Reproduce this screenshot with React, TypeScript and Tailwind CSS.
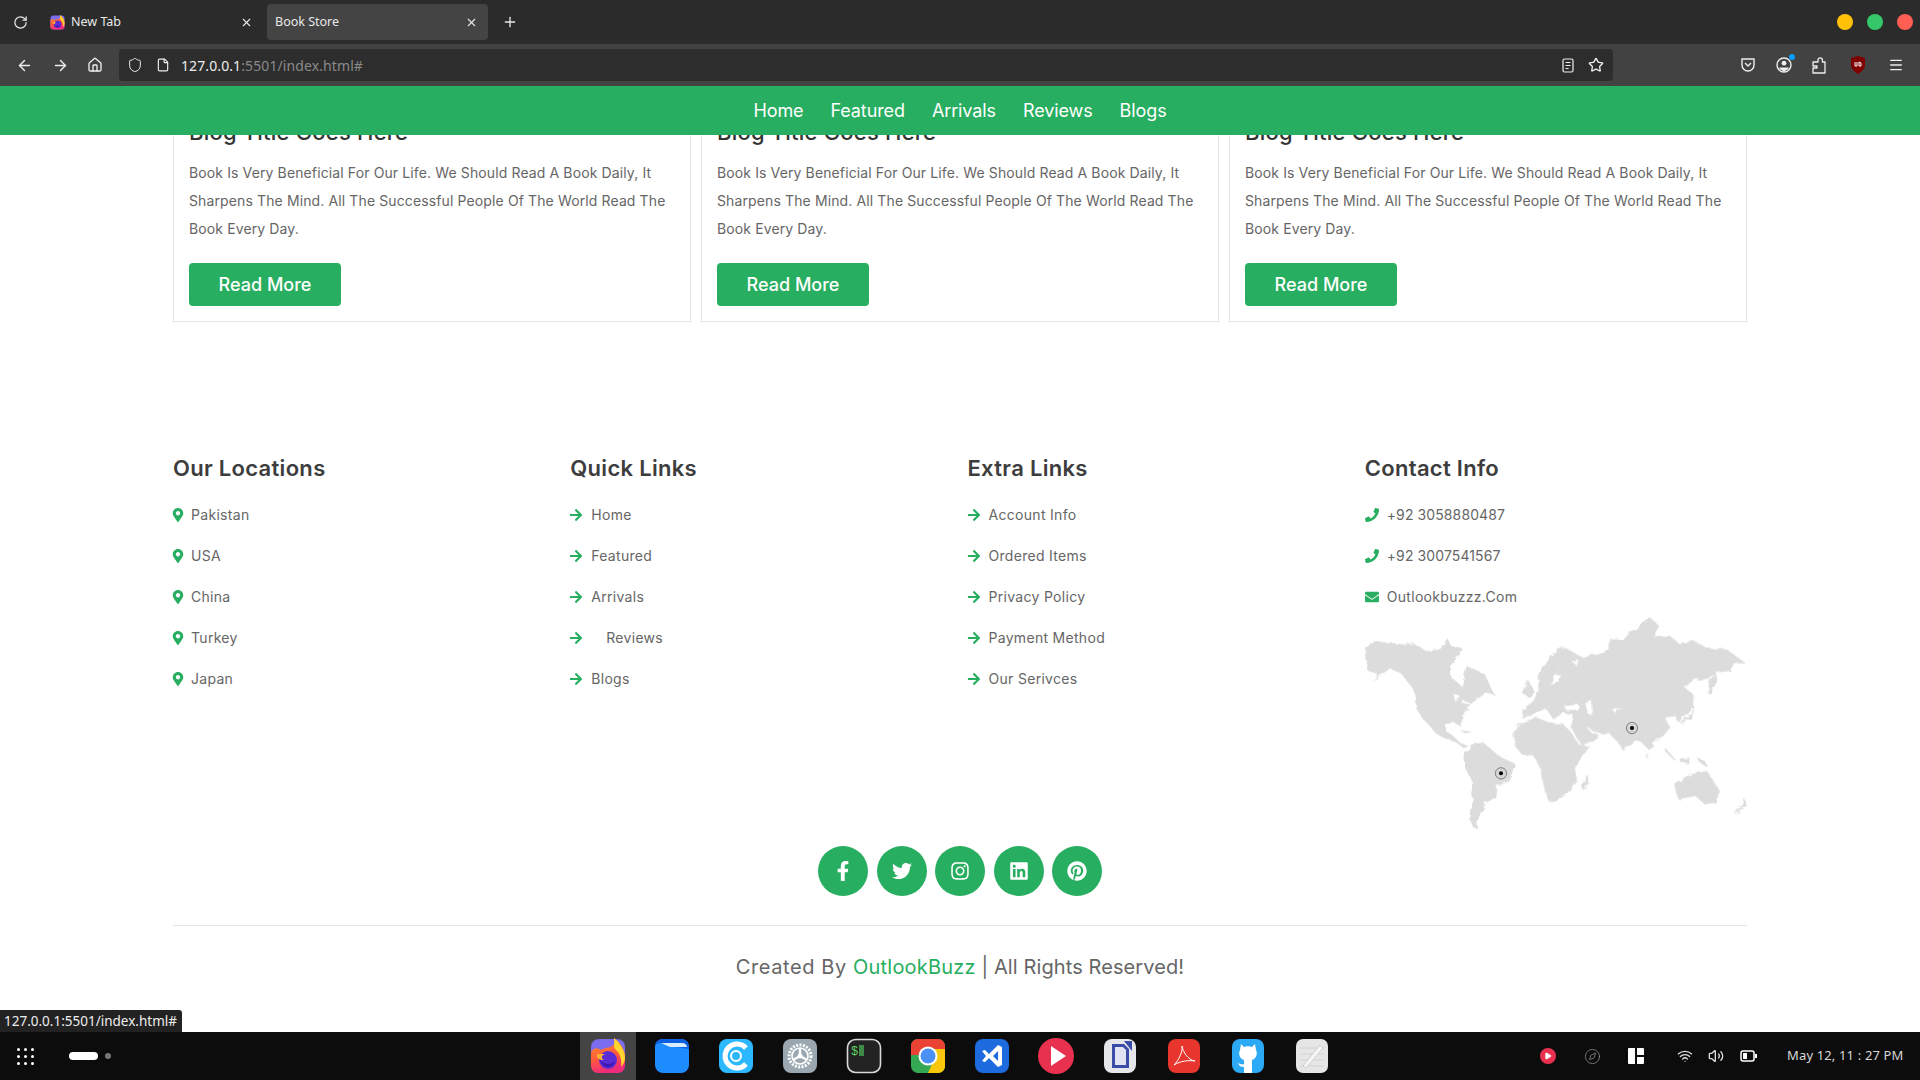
import { ArrowLeft, ArrowRight, Home, Menu, Plus, RotateCw, Shield, Star, File, X, Wifi, Volume2, Compass, Play } from "lucide-react"
import {
  FaMapMarkerAlt,
  FaArrowRight,
  FaPhone,
  FaEnvelope,
  FaFacebookF,
  FaTwitter,
  FaInstagram,
  FaLinkedin,
  FaPinterest,
} from "react-icons/fa"

const font = "font-['Inter','Noto_Sans',sans-serif]"

const navLinks = ["Home", "Featured", "Arrivals", "Reviews", "Blogs"]
const locations = ["Pakistan", "USA", "China", "Turkey", "Japan"]
const quickLinks = ["Home", "Featured", "Arrivals", "Reviews", "Blogs"]
const extraLinks = ["Account Info", "Ordered Items", "Privacy Policy", "Payment Method", "Our Serivces"]

const FirefoxIcon = ({ size = 36 }: { size?: number }) => (
  <svg width={size} height={size} viewBox="0 0 36 36">
    <defs>
      <linearGradient id="ffbg" x1="0" y1="0" x2="0.3" y2="1">
        <stop offset="0" stopColor="#ff9a2e" />
        <stop offset="0.6" stopColor="#ff5a3c" />
        <stop offset="1" stopColor="#ee2a7b" />
      </linearGradient>
    </defs>
    <rect x="1" y="1" width="34" height="34" rx="8" fill="#7b6cf0" />
    <path d="M1 14 C5 8 9 11 11 12 C16 9 22 10 24 6 C26 3 24 1 24 0 C31 5 35 12 35 19 L35 27 C35 32 32 35 27 35 L9 35 C4 35 1 32 1 27 Z" fill="url(#ffbg)" />
    <path d="M24 0 C30 5 35 12 35 20 C35 24 33 27 31 29 C32 22 30 15 25 11 C23 8 25 4 24 0 Z" fill="#ffd52e" />
    <circle cx="18" cy="22" r="9" fill="#5b2bd6" />
    <path d="M7 16 L15 16 C11 18 11 20 14 22 C9 22 6 20 7 16 Z" fill="#ffb02e" />
    <path d="M10 22 C14 27 21 27 25 23 C24 30 14 32 10 22 Z" fill="#3b18b0" />
  </svg>
)

const FilesIcon = () => (
  <svg width="36" height="36" viewBox="0 0 36 36">
    <rect x="1" y="1" width="34" height="34" rx="8" fill="#1c8cff" />
    <path d="M1 9 C1 4 4 1 9 1 L27 1 C32 1 35 4 35 9 L35 11 L16 8 L8 5 C4 5 1 6 1 9 Z" fill="#0b5fe0" />
    <path d="M7 5 L28 5 C31 5 33 7 33 9 L16 9 Z" fill="#d8ecff" />
  </svg>
)

const CIcon = () => (
  <svg width="36" height="36" viewBox="0 0 36 36">
    <rect x="1" y="1" width="34" height="34" rx="8" fill="#2bb8ff" />
    <path d="M28 26 A12 12 0 1 1 28 10" fill="none" stroke="#fff" strokeWidth="5" />
    <circle cx="18" cy="18" r="5" fill="none" stroke="#fff" strokeWidth="2" />
  </svg>
)

const SettingsIcon = () => (
  <svg width="36" height="36" viewBox="0 0 36 36">
    <rect x="1" y="1" width="34" height="34" rx="8" fill="#9aa7b0" />
    <circle cx="18" cy="18" r="11" fill="none" stroke="#fff" strokeWidth="3" strokeDasharray="2 1.4" />
    <circle cx="18" cy="18" r="8" fill="none" stroke="#fff" strokeWidth="1.6" />
    <path d="M18 18 L18 10 M18 18 L11 22 M18 18 L25 22" stroke="#fff" strokeWidth="2.4" />
    <circle cx="18" cy="18" r="2.5" fill="#fff" />
  </svg>
)

const TerminalIcon = () => (
  <svg width="36" height="36" viewBox="0 0 36 36">
    <rect x="1.5" y="1.5" width="33" height="33" rx="8" fill="#222" stroke="#d8d8d8" strokeWidth="1.6" />
    <rect x="13" y="7" width="5" height="11" fill="#3d8a4a" />
    <text x="5" y="17" fontSize="12" fill="#5fd35f" fontFamily="Liberation Mono">$</text>
  </svg>
)

const ChromeIcon = () => (
  <svg width="36" height="36" viewBox="0 0 36 36">
    <rect x="1" y="1" width="34" height="34" rx="7" fill="#34a853" />
    <path d="M1 8 C1 4 4 1 8 1 L28 1 C32 1 35 4 35 8 L35 11 L18 11 L8 17 L1 17 Z" fill="#ea4335" />
    <path d="M35 11 L35 28 C35 32 32 35 28 35 L18 35 L24 22 L18 11 Z" fill="#fbc70a" />
    <circle cx="18" cy="18" r="9.5" fill="#fff" />
    <circle cx="18" cy="18" r="7.5" fill="#4a90f5" />
  </svg>
)

const VsCodeIcon = () => (
  <svg width="36" height="36" viewBox="0 0 36 36">
    <rect x="1" y="1" width="34" height="34" rx="8" fill="#1e6be0" />
    <path d="M24 7 L24 29 L28 27 L28 9 Z M24 7 L13 18 L24 29 L24 23 L19 18 L24 13 Z" fill="#fff" />
    <path d="M8 13 L11 12 L17 18 L11 24 L8 23 L12 18 Z" fill="#fff" />
  </svg>
)

const DockIcons = [
  <FilesIcon key="files" />,
  <CIcon key="c" />,
  <SettingsIcon key="settings" />,
  <TerminalIcon key="terminal" />,
  <ChromeIcon key="chrome" />,
  <VsCodeIcon key="code" />,
  <svg key="play" width="36" height="36" viewBox="0 0 36 36">
    <circle cx="18" cy="18" r="18" fill="#e8304f" />
    <path d="M13 8 L28 18 L13 28 Z" fill="#fff" />
  </svg>,
  <svg key="doc" width="36" height="36" viewBox="0 0 36 36">
    <rect x="2" y="1" width="32" height="34" rx="8" fill="#e4e6ea" />
    <path d="M10 6 L22 6 L27 11 L27 30 L10 30 Z" fill="#3b4ba8" />
    <path d="M13 9 L21 9 L24 12 L24 27 L13 27 Z" fill="#dfe3f2" />
    <path d="M22 3 L30 3 L30 13 Z" fill="#3b4ba8" />
  </svg>,
  <svg key="pdf" width="36" height="36" viewBox="0 0 36 36">
    <rect x="2" y="1" width="32" height="34" rx="8" fill="#e8352e" />
    <path d="M8 27 C13 22 17 13 16 8 C17 14 22 22 29 23 C23 22 14 23 8 27 Z" fill="none" stroke="#fff" strokeWidth="1" />
  </svg>,
  <svg key="git" width="36" height="36" viewBox="0 0 36 36">
    <rect x="2" y="1" width="32" height="34" rx="8" fill="#2daaf5" />
    <path d="M11 6 L14 9 C16 8 20 8 22 9 L25 6 L26 12 C28 16 26 21 22 22 L22 35 L14 35 L14 29 C11 29 9 28 8 25 C10 26 12 27 14 26 L14 22 C10 21 8 16 10 12 Z" fill="#fff" />
  </svg>,
  <svg key="notes" width="36" height="36" viewBox="0 0 36 36">
    <rect x="2" y="1" width="32" height="34" rx="7" fill="#e6e6e6" />
    <path d="M6 10 H30 M6 16 H30 M6 22 H30 M6 28 H30" stroke="#d2d2d2" strokeWidth="1" />
    <path d="M9 28 L26 7 L29 10 L12 30 Z" fill="#f6f6f6" stroke="#c4c4c4" strokeWidth="0.7" />
  </svg>,
]

// continents traced by hand, units are 1/3 px
const WorldMap = () => (
  <svg width="382" height="220" viewBox="15 18 1146 660" className="block">
    <defs>
      <filter id="coast" x="-5%" y="-5%" width="110%" height="110%">
        <feTurbulence type="fractalNoise" baseFrequency="0.05" numOctaves="2" seed="4" />
        <feDisplacementMap in="SourceGraphic" scale="14" />
      </filter>
    </defs>
    <g filter="url(#coast)">
      <g fill="#dcdcdc">
        <path d="M20 110 L45 90 L90 95 L130 100 L160 98 L200 120 L240 115 L262 82 L275 105 L305 110 L300 130 L270 165 L270 195 L305 225 L320 165 L345 175 L375 190 L395 235 L405 252 L380 245 L350 265 L330 280 L310 320 L300 345 L275 330 L258 338 L258 360 L285 380 L300 395 L325 405 L312 412 L290 395 L255 382 L230 370 L205 340 L190 325 L170 295 L165 260 L160 235 L125 190 L90 172 L60 195 L35 210 L55 190 L25 180 L20 150 L15 130 Z" />
        <path d="M310 435 L335 400 L370 395 L400 420 L425 440 L465 458 L455 490 L440 515 L410 525 L405 560 L380 575 L360 610 L350 640 L358 655 L340 650 L330 625 L338 570 L335 510 L315 470 Z" />
        <path d="M300 358 L322 360 L340 368 L318 368 Z" />
        <path d="M485 245 L505 208 L525 245 L505 258 Z" />
        <g transform="translate(570 0)">
          <path d="M-82 295 L-50 270 L-35 240 L-35 190 L-20 170 L10 125 L40 108 L70 125 L100 140 L150 125 L175 115 L185 85 L220 85 L245 60 L290 30 L300 20 L328 45 L310 75 L360 75 L390 100 L430 90 L470 110 L530 115 L585 155 L550 160 L540 180 L500 185 L470 205 L430 205 L405 230 L430 250 L430 285 L385 335 L375 315 L345 320 L360 350 L340 375 L305 395 L315 410 L300 420 L275 395 L255 390 L220 420 L205 395 L175 365 L150 368 L135 365 L108 345 L118 358 L128 368 L148 372 L125 390 L95 405 L60 345 L68 310 L40 305 L10 325 L-10 295 L-30 300 L-60 315 L-85 320 Z" />
          <path d="M-110 375 L-90 335 L-40 320 L0 335 L40 340 L60 360 L90 405 L120 405 L95 440 L75 470 L78 510 L50 550 L15 572 L-5 570 L-20 520 L-25 480 L-50 435 L-85 430 L-105 405 Z" />
          <path d="M95 530 L105 500 L117 495 L110 525 L100 538 Z" />
          <path d="M472 245 L480 205 L498 185 L500 215 L480 250 Z" />
          <path d="M388 335 L420 310 L435 285 L425 320 L395 335 Z" />
          <path d="M345 410 L380 450 L370 445 L345 420 Z" />
          <path d="M390 445 L420 440 L412 458 L392 455 Z" />
          <path d="M440 440 L465 450 L472 468 L450 455 Z" />
          <path d="M285 420 L300 445 L290 440 Z" />
          <path d="M375 520 L410 495 L440 485 L470 480 L490 510 L510 540 L495 575 L465 580 L435 555 L385 565 Z" />
          <path d="M552 608 L575 585 L580 560 L590 575 L565 605 Z" />
        </g>
      </g>
      <g fill="#ffffff">
        <path d="M280 250 L300 255 L290 275 Z M305 265 L330 275 L310 280 Z" />
        <g transform="translate(570 0)">
          <path d="M45 285 L85 280 L85 295 L50 298 Z" />
          <path d="M105 275 L125 270 L130 315 L115 310 Z" />
          <path d="M185 295 L215 290 L195 305 Z" />
          <path d="M0 225 L15 185 L30 155 L15 190 L35 195 L15 215 Z" />
          <path d="M65 150 L85 145 L80 165 Z" />
        </g>
      </g>
    </g>
    {[
      [423, 487],
      [816, 351],
    ].map(([x, y]) => (
      <g key={x}>
        <circle cx={x} cy={y} r="17" fill="#d4d4d4" stroke="#555" strokeWidth="2" />
        <circle cx={x} cy={y} r="6" fill="#000" />
      </g>
    ))}
  </svg>
)

const Card = () => (
  <div className="border border-[#e5e5e5] px-[15px] pb-[15px] pt-[1px]">
    <h3 className="text-[22px] leading-[30px] font-medium text-[#333] tracking-[0.2px]">Blog Title Goes Here</h3>
    <p className="mt-[12px] text-[14px] leading-[28px] text-[#666] tracking-[0.12px]">
      Book Is Very Beneficial For Our Life. We Should Read A Book Daily, It Sharpens The Mind. All The Successful People
      Of The World Read The Book Every Day.
    </p>
    <button className="mt-[20px] block w-[152px] h-[43px] rounded-[4px] bg-[#27ae60] text-white text-[18px] font-medium">
      Read More
    </button>
  </div>
)

const FooterCol = ({ title, children }: { title: string; children: React.ReactNode }) => (
  <div>
    <h3 className="text-[22px] leading-[30px] font-semibold text-[#3d3d3d] tracking-[0.3px]">{title}</h3>
    <div className="mt-[11px]">{children}</div>
  </div>
)

const Row = ({ icon, children, gap }: { icon: React.ReactNode; children: React.ReactNode; gap: string }) => (
  <div className={`flex items-center h-[41px] text-[14px] text-[#666] tracking-[0.3px] ${gap}`}>
    <span className="text-[#27ae60] text-[14px]">{icon}</span>
    <span>{children}</span>
  </div>
)

export default function App() {
  return (
    <div className={`h-screen flex flex-col overflow-hidden bg-white ${font}`}>
      {/* Tab strip */}
      <div className="h-[44px] bg-[#2b2b2b] flex items-center text-[#e8e8e8] text-[12.5px] shrink-0 font-['Noto_Sans',sans-serif]">
        <RotateCw size={15} className="ml-[13px]" />
        <div className="ml-[22px] w-[203px] flex items-center">
          <FirefoxIcon size={15} />
          <span className="ml-[6px] flex-1">New Tab</span>
          <X size={13} />
        </div>
        <div className="ml-[14px] w-[221px] h-[36px] rounded-[4px] bg-[#444] flex items-center pl-[8px] pr-[10px] justify-between">
          <span>Book Store</span>
          <X size={13} />
        </div>
        <Plus size={16} className="ml-[14px]" />
        <div className="ml-auto mr-[7px] flex gap-[14px]">
          <span className="w-[16px] h-[16px] rounded-full bg-[#ffc107]" />
          <span className="w-[16px] h-[16px] rounded-full bg-[#35c76a]" />
          <span className="w-[16px] h-[16px] rounded-full bg-[#ff5f52]" />
        </div>
      </div>

      {/* Toolbar */}
      <div className="h-[42px] bg-[#424242] flex items-center text-[#eee] shrink-0 font-['Noto_Sans',sans-serif]">
        <ArrowLeft size={17} className="ml-[16px]" />
        <ArrowRight size={17} className="ml-[19px]" />
        <Home size={16} className="ml-[18px]" />
        <div className="ml-[16px] w-[1494px] h-[32px] rounded-[4px] bg-[#2d2d2d] flex items-center pl-[8px] pr-[9px]">
          <Shield size={16} strokeWidth={1.5} />
          <File size={14} className="ml-[13px]" />
          <span className="ml-[11px] text-[14px] tracking-[0.1px]">
            127.0.0.1<span className="text-[#8a8a8a]">:5501/index.html#</span>
          </span>
          <svg width="12" height="15" viewBox="0 0 12 15" className="ml-auto">
            <rect x="1" y="1" width="10" height="13" rx="1.5" fill="none" stroke="#eee" strokeWidth="1.2" />
            <path d="M3.5 4.5 H8.5 M3.5 7.5 H8.5 M3.5 10.5 H6.5" stroke="#eee" strokeWidth="1.2" />
          </svg>
          <Star size={16} className="ml-[14px]" />
        </div>
        <svg width="16" height="16" viewBox="0 0 16 16" className="ml-[127px]">
          <path d="M2 2 H14 V8 A6 6 0 0 1 2 8 Z M5 6 L8 9 L11 6" fill="none" stroke="#eee" strokeWidth="1.4" />
        </svg>
        <span className="relative ml-[20px]">
          <svg width="16" height="16" viewBox="0 0 16 16" className="block">
            <circle cx="8" cy="8" r="7" fill="none" stroke="#eee" strokeWidth="1.4" />
            <circle cx="8" cy="6.2" r="2.4" fill="#eee" />
            <path d="M3.5 10.5 H12.5 V12 L8 14.5 L3.5 12 Z" fill="#eee" />
          </svg>
          <span className="absolute -top-[3px] -right-[3px] w-[6px] h-[6px] rounded-full bg-[#0a9dff]" />
        </span>
        <svg width="16" height="17" viewBox="0 0 16 17" className="ml-[20px]">
          <path d="M1 5 H6 V3 A2.2 2.2 0 0 1 10.4 3 V5 H13 V16 H1 V11 H5 V9 H1 Z" fill="none" stroke="#eee" strokeWidth="1.3" strokeLinejoin="round" />
        </svg>
        <svg width="16" height="18" viewBox="0 0 16 18" className="ml-[22px]">
          <path d="M1 2 L8 0 L15 2 V9 C15 13 11 16 8 18 C5 16 1 13 1 9 Z" fill="#800000" />
          <path d="M5 6 V10 H7 V6 M9 6 V10 H11 V7 L9 6" fill="none" stroke="#fff" strokeWidth="1" />
        </svg>
        <Menu size={16} className="ml-[22px]" />
      </div>

      {/* Site nav */}
      <nav className="h-[49px] bg-[#27ae60] shrink-0 flex items-center justify-center gap-[27px] text-white text-[18px] relative z-10 tracking-[-0.1px]">
        {navLinks.map((link) => (
          <a key={link} href="#">
            {link}
          </a>
        ))}
      </nav>

      {/* Page */}
      <main className="flex-1 relative overflow-hidden">
        <div className="mx-[173px] -mt-[20px]">
          <div className="grid grid-cols-3 gap-[10px]">
            <Card />
            <Card />
            <Card />
          </div>

          <div className="mt-[131px] grid grid-cols-4 gap-[15px]">
            <FooterCol title="Our Locations">
              {locations.map((item) => (
                <Row key={item} icon={<FaMapMarkerAlt className="-ml-[2px]" />} gap="gap-[6px]">
                  {item}
                </Row>
              ))}
            </FooterCol>
            <FooterCol title="Quick Links">
              {quickLinks.map((item) => (
                <Row key={item} icon={<FaArrowRight className="-ml-[1px]" />} gap="gap-[8px]">
                  <span className={item === "Reviews" ? "ml-[15px]" : ""}>{item}</span>
                </Row>
              ))}
            </FooterCol>
            <FooterCol title="Extra Links">
              {extraLinks.map((item) => (
                <Row key={item} icon={<FaArrowRight className="-ml-[1px]" />} gap="gap-[8px]">
                  {item}
                </Row>
              ))}
            </FooterCol>
            <FooterCol title="Contact Info">
              <Row icon={<FaPhone />} gap="gap-[8px]">
                <span className="tracking-[0.1px]">+92 3058880487</span>
              </Row>
              <Row icon={<FaPhone />} gap="gap-[8px]">
                <span className="tracking-[0.1px]">+92 3007541567</span>
              </Row>
              <Row icon={<FaEnvelope />} gap="gap-[8px]">
                Outlookbuzzz.Com
              </Row>
              <WorldMap />
            </FooterCol>
          </div>

          <div className="mt-[9px] flex justify-center gap-[8.5px] text-white text-[20px]">
            <span className="w-[50px] h-[50px] rounded-full bg-[#27ae60] flex items-center justify-center"><FaFacebookF /></span>
            <span className="w-[50px] h-[50px] rounded-full bg-[#27ae60] flex items-center justify-center"><FaTwitter /></span>
            <span className="w-[50px] h-[50px] rounded-full bg-[#27ae60] flex items-center justify-center"><FaInstagram /></span>
            <span className="w-[50px] h-[50px] rounded-full bg-[#27ae60] flex items-center justify-center"><FaLinkedin /></span>
            <span className="w-[50px] h-[50px] rounded-full bg-[#27ae60] flex items-center justify-center"><FaPinterest /></span>
          </div>

          <div className="mt-[29px] border-t border-[#e5e5e5] pt-[26px] text-center text-[20px] leading-[30px] text-[#666] tracking-[0.1px]">
            <span className="tracking-[0.6px]">Created By </span>
            <span className="text-[#27ae60] tracking-[0.2px]">OutlookBuzz</span> | All Rights Reserved!
          </div>
        </div>

        {/* Link hover status */}
        <div className="absolute left-0 bottom-0 h-[22px] w-[182px] bg-[#222] rounded-tr-[3px] text-[#eee] text-[13.5px] leading-[22px] pl-[4px] font-['Noto_Sans',sans-serif]">
          127.0.0.1:5501/index.html#
        </div>
      </main>

      {/* Desktop dock */}
      <div className="h-[48px] bg-[#0c0c0c] shrink-0 flex items-center text-white font-['Noto_Sans',sans-serif]">
        <div className="w-[576px] flex items-center">
          <div className="ml-[17px] grid grid-cols-3 gap-[4px]">
            {Array.from({ length: 9 }).map((_, i) => (
              <span key={i} className="w-[3px] h-[3px] rounded-full bg-white" />
            ))}
          </div>
          <span className="ml-[35px] w-[29px] h-[8px] rounded-full bg-white" />
          <span className="ml-[7px] w-[6px] h-[6px] rounded-full bg-[#777]" />
        </div>
        <div className="flex items-center">
          <div className="w-[56px] mx-[4px] h-[48px] bg-[#444] flex items-center justify-center">
            <FirefoxIcon />
          </div>
          {DockIcons.map((icon, i) => (
            <div key={i} className="w-[64px] flex items-center justify-center">
              {icon}
            </div>
          ))}
        </div>
        <div className="flex-1 flex items-center text-[#ddd]">
          <span className="ml-[196px] w-[16px] h-[16px] rounded-full bg-[#e8304f] flex items-center justify-center">
            <Play size={8} fill="#fff" stroke="#fff" />
          </span>
          <Compass size={17} strokeWidth={1} className="ml-[28px] text-[#999]" />
          <svg width="16" height="16" viewBox="0 0 16 16" className="ml-[27px]">
            <path d="M0 1 Q0 0 1 0 H7 V16 H1 Q0 16 0 15 Z M9 0 H15 Q16 0 16 1 V7 H9 Z M9 9 H16 V15 Q16 16 15 16 H9 Z" fill="#fff" />
          </svg>
          <Wifi size={16} className="ml-[33px]" />
          <Volume2 size={16} className="ml-[15px]" />
          <svg width="17" height="12" viewBox="0 0 17 12" className="ml-[16px]">
            <rect x="1" y="1" width="13" height="10" rx="2" fill="none" stroke="#fff" strokeWidth="1.5" />
            <rect x="3" y="3" width="4" height="6" fill="#fff" />
            <rect x="15" y="4" width="2" height="4" fill="#fff" />
          </svg>
          <span className="ml-[30px] text-[13px] text-[#d8d8d8] whitespace-nowrap tracking-[0.15px]">May 12, 11 : 27 PM</span>
        </div>
      </div>
    </div>
  )
}
